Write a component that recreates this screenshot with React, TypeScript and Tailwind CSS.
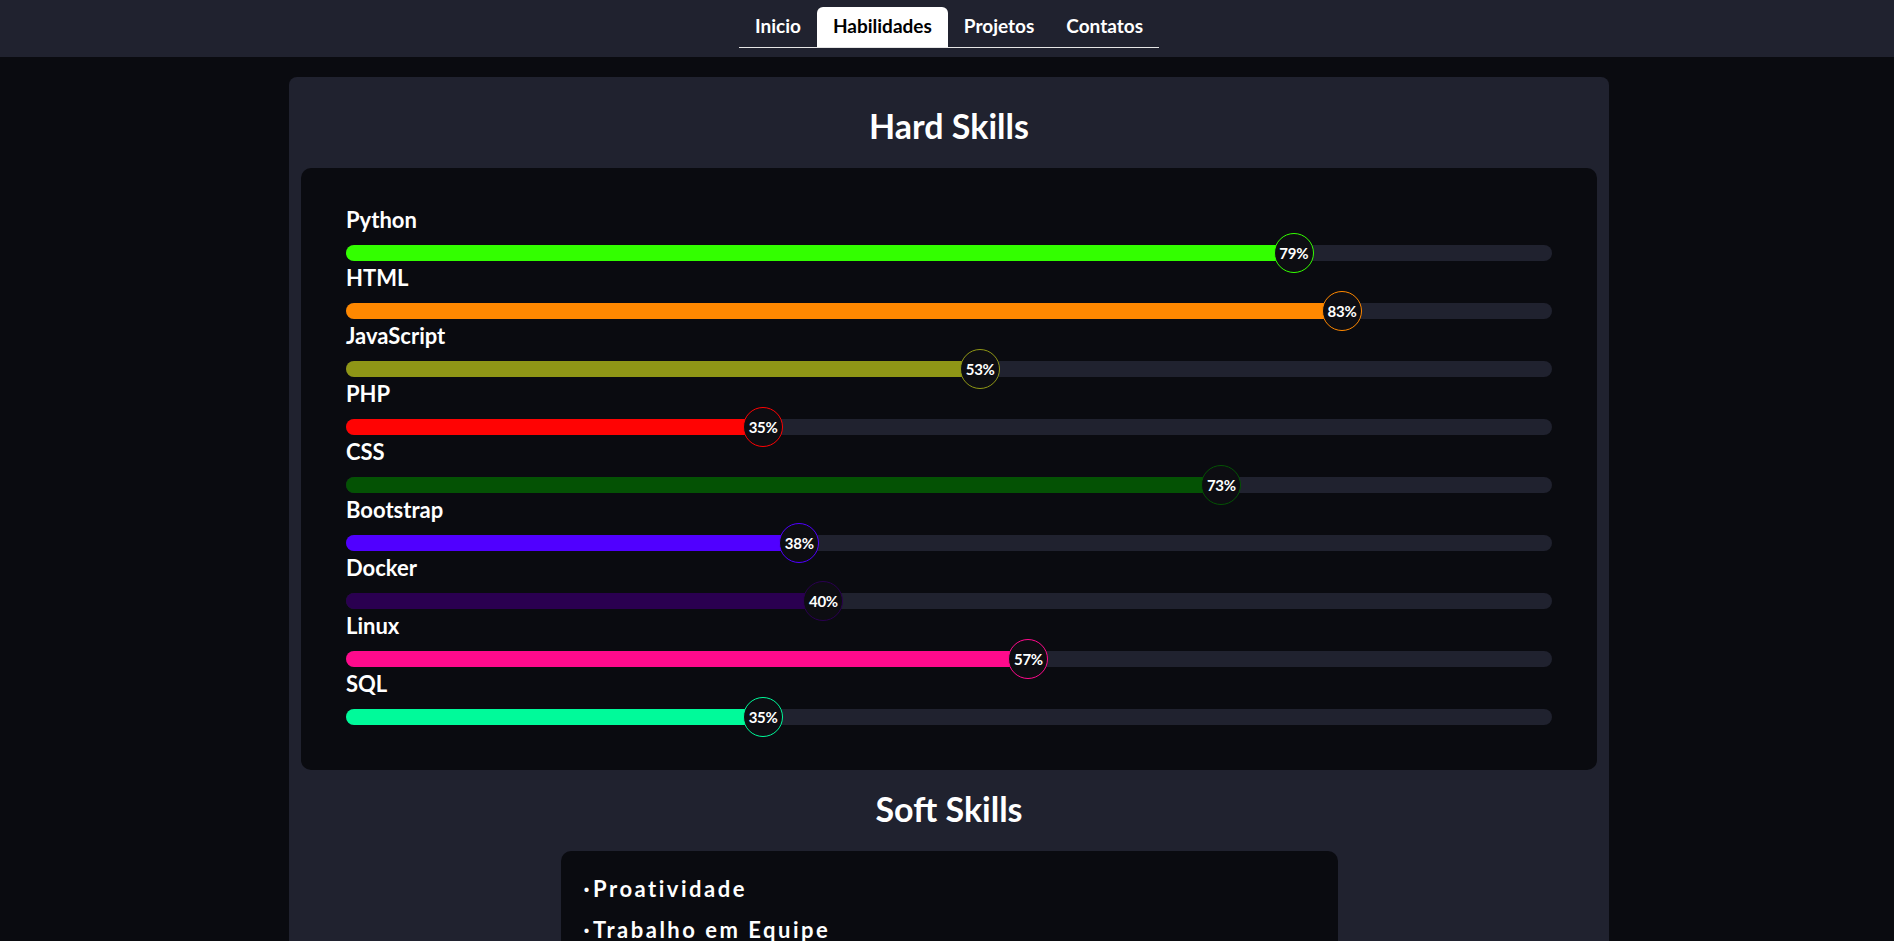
import React from 'react';

type Skill = { name: string; pct: number; color: string };

const hardSkills: Skill[] = [
  { name: 'Python', pct: 79, color: '#33ff00' },
  { name: 'HTML', pct: 83, color: '#ff8800' },
  { name: 'JavaScript', pct: 53, color: '#8f9616' },
  { name: 'PHP', pct: 35, color: '#ff0303' },
  { name: 'CSS', pct: 73, color: '#045204' },
  { name: 'Bootstrap', pct: 38, color: '#5000ff' },
  { name: 'Docker', pct: 40, color: '#2a0050' },
  { name: 'Linux', pct: 57, color: '#ff0a8c' },
  { name: 'SQL', pct: 35, color: '#00fa9a' },
];

const softSkills = ['Proatividade', 'Trabalho em Equipe'];

const tabs = ['Inicio', 'Habilidades', 'Projetos', 'Contatos'];

const SkillBar: React.FC<{ skill: Skill }> = ({ skill }) => (
  <div className="mb-[3px]">
    <h3 className="text-[22px] leading-[28px] font-bold text-white mb-[11px]">{skill.name}</h3>
    <div className="relative h-4 w-full rounded-full bg-[#20222f]">
      <div
        className="relative h-4 rounded-full"
        style={{ width: `${skill.pct}%`, backgroundColor: skill.color }}
      >
        <span
          className="absolute -right-[15px] top-1/2 -translate-y-1/2 w-10 h-10 rounded-full border bg-[#0d0d12] flex items-center justify-center text-[15px] font-bold text-white tracking-[-0.3px]"
          style={{ borderColor: skill.color }}
        >
          {skill.pct}%
        </span>
      </div>
    </div>
  </div>
);

const App: React.FC = () => {
  return (
    <div className="min-h-screen bg-[#0a0b10] text-white font-['Lato',sans-serif]">
      <nav className="h-[57px] bg-[#20222f] flex justify-center pt-[7px] pl-1">
        <ul className="flex h-[41px] border-b border-[#e5e5e5]">
          {tabs.map((t) => (
            <li
              key={t}
              className={
                t === 'Habilidades'
                  ? 'px-[16px] flex items-center pb-[2px] text-[19px] font-bold bg-white text-black rounded-t-md'
                  : 'px-[16px] flex items-center pb-[2px] text-[19px] font-bold text-white'
              }
            >
              {t}
            </li>
          ))}
        </ul>
      </nav>

      <div className="pl-1">
        <main className="w-[1320px] mx-auto mt-[20px] bg-[#20222f] rounded-lg px-3 pt-[28px] pb-10">
          <h2 className="text-center text-[34px] leading-[41px] font-bold mb-[22px]">Hard Skills</h2>
          <div className="bg-[#0a0b10] rounded-[10px] px-[45px] pt-[38px] pb-[42px]">
            {hardSkills.map((s) => (
              <SkillBar key={s.name} skill={s} />
            ))}
          </div>

          <h2 className="text-center text-[34px] leading-[41px] font-bold mt-[18px] mb-[22px]">Soft Skills</h2>
          <div className="w-[777px] mx-auto bg-[#0a0b10] rounded-[10px] px-[23px] pt-[24px] pb-6">
            <ul className="flex flex-col gap-[13px]">
              {softSkills.map((s) => (
                <li key={s} className="text-[22px] leading-[28px] font-bold tracking-[2.5px]">
                  <span className="mr-[1px]">·</span>
                  {s}
                </li>
              ))}
            </ul>
          </div>
        </main>
      </div>
    </div>
  );
};

export default App;
